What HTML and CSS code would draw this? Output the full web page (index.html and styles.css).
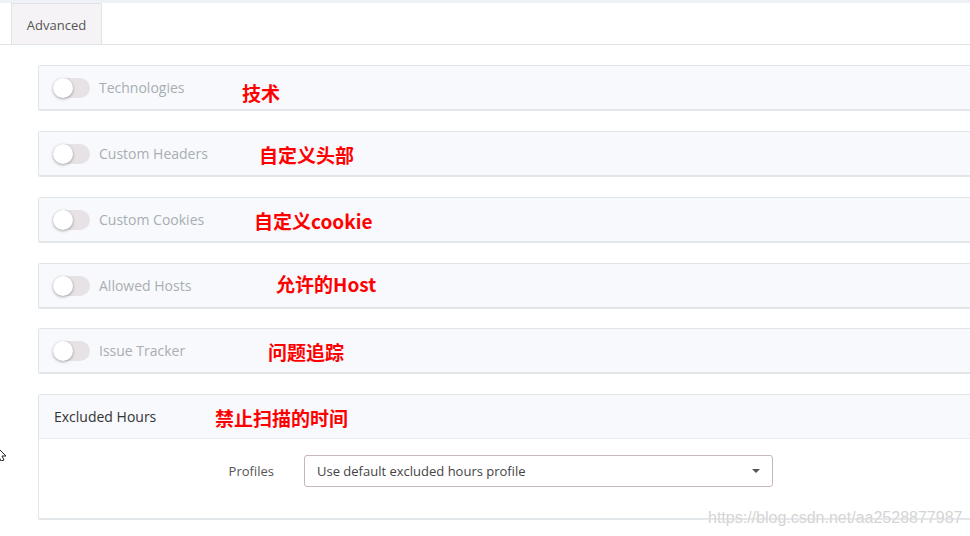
FILE: index.html
```html
<!DOCTYPE html>
<html lang="zh-CN">
<head>
    <meta charset="UTF-8">
    <title>Advanced</title>
    <link rel="stylesheet" href="styles.css">
</head>
<body>
    <div class="topstrip"></div>
    <div class="tabs">
        <div class="tab">Advanced</div>
    </div>

    <div class="content">
        <div class="panel">
            <div class="panel-head">
                <span class="toggle"><span class="knob"></span></span>
                <span class="label">Technologies</span>
                <span class="note note-tech">技术</span>
            </div>
        </div>
        <div class="panel">
            <div class="panel-head">
                <span class="toggle"><span class="knob"></span></span>
                <span class="label">Custom Headers</span>
                <span class="note note-headers">自定义头部</span>
            </div>
        </div>
        <div class="panel">
            <div class="panel-head">
                <span class="toggle"><span class="knob"></span></span>
                <span class="label">Custom Cookies</span>
                <span class="note note-cookies">自定义cookie</span>
            </div>
        </div>
        <div class="panel">
            <div class="panel-head">
                <span class="toggle"><span class="knob"></span></span>
                <span class="label">Allowed Hosts</span>
                <span class="note note-hosts">允许的Host</span>
            </div>
        </div>
        <div class="panel panel-tight">
            <div class="panel-head">
                <span class="toggle"><span class="knob"></span></span>
                <span class="label">Issue Tracker</span>
                <span class="note note-tracker">问题追踪</span>
            </div>
        </div>
        <div class="panel">
            <div class="panel-head plain">
                <span class="title">Excluded Hours</span>
                <span class="note note-hours">禁止扫描的时间</span>
            </div>
            <div class="panel-body">
                <label class="form-label">Profiles</label>
                <div class="select">
                    <span>Use default excluded hours profile</span>
                    <span class="caret"></span>
                </div>
            </div>
        </div>
    </div>

    <svg class="cursor" width="10" height="16" viewBox="0 0 10 16">
        <path d="M-4 1 L6 11 L2 11 L4 15 L1 16 L-1 12 L-4 15 Z" fill="#fff" stroke="#222" stroke-width="1"/>
    </svg>

    <div class="watermark">https://blog.csdn.net/aa2528877987</div>
</body>
</html>
```

FILE: styles.css
```css
body {
    margin: 0;
    font-family: "Open Sans", Arial, sans-serif;
    background: #fff;
    width: 970px;
    height: 536px;
    overflow: hidden;
    position: relative;
}
.topstrip {
    height: 3px;
    background: #eef1f6;
}
.tabs {
    height: 41px;
    border-bottom: 1px solid #dde4e6;
    padding-left: 11px;
    display: flex;
}
.tab {
    width: 91px;
    height: 41px;
    box-sizing: border-box;
    border: 1px solid #e1e4e6;
    border-bottom: none;
    background: #f6f3f6;
    color: #555;
    font-size: 13px;
    display: flex;
    align-items: center;
    justify-content: center;
    padding-top: 1px;
}
.content {
    padding: 20px 0 0 38px;
    display: flex;
    flex-direction: column;
    gap: 21px;
}
.panel {
    width: 950px;
    border: 1px solid #e0e5e8;
    border-radius: 2px;
    box-shadow: 0 1px 0 #e4e7ea;
    background: #fff;
}
.panel-tight {
    margin-top: -1px;
}
.panel-head {
    height: 43px;
    background: #f7f9fd;
    display: flex;
    align-items: center;
    padding-left: 14px;
    position: relative;
}
.panel-head.plain {
    padding-left: 15px;
    border-bottom: 1px solid #e8ecef;
}
.toggle {
    width: 37px;
    height: 20px;
    border-radius: 10px;
    background: #e6e2e6;
    position: relative;
    margin-right: 9px;
}
.knob {
    position: absolute;
    left: 0;
    top: 0;
    width: 20px;
    height: 20px;
    border-radius: 50%;
    background: #fff;
    box-shadow: 0 1px 3px rgba(0,0,0,0.35);
}
.label {
    color: #a8aeb1;
    font-size: 14px;
}
.title {
    color: #333;
    font-size: 14px;
}
.note {
    position: absolute;
    top: 50%;
    transform: translateY(-50%);
    color: #ff0000;
    font-family: "Noto Sans CJK SC", "Noto Sans", sans-serif;
    font-weight: bold;
    font-size: 19px;
    line-height: 1;
}
.note-tech { left: 203px; margin-top: 4px; }
.note-headers { left: 220px; }
.note-cookies { left: 215px; }
.note-hosts { left: 237px; margin-top: -3px; }
.note-tracker { left: 229px; }
.note-hours { left: 176px; }
.panel-body {
    height: 79px;
    box-sizing: border-box;
    padding-top: 16px;
    display: flex;
    align-items: flex-start;
}
.form-label {
    width: 235px;
    text-align: right;
    color: #555;
    font-size: 13px;
    margin-right: 30px;
    line-height: 32px;
}
.select {
    width: 469px;
    height: 32px;
    box-sizing: border-box;
    border: 1px solid #c7b7b9;
    border-radius: 3px;
    display: flex;
    align-items: center;
    justify-content: space-between;
    padding: 0 12px;
    font-size: 13px;
    color: #444;
}
.caret {
    width: 0;
    height: 0;
    border-left: 4px solid transparent;
    border-right: 4px solid transparent;
    border-top: 4px solid #555;
}
.cursor {
    position: absolute;
    left: 0;
    top: 445px;
}
.watermark {
    position: absolute;
    left: 708px;
    top: 509px;
    font-family: "Liberation Sans", Arial, sans-serif;
    font-size: 16px;
    color: #d4d4d4;
    text-shadow: 0 0 2px #fff;
}
```
